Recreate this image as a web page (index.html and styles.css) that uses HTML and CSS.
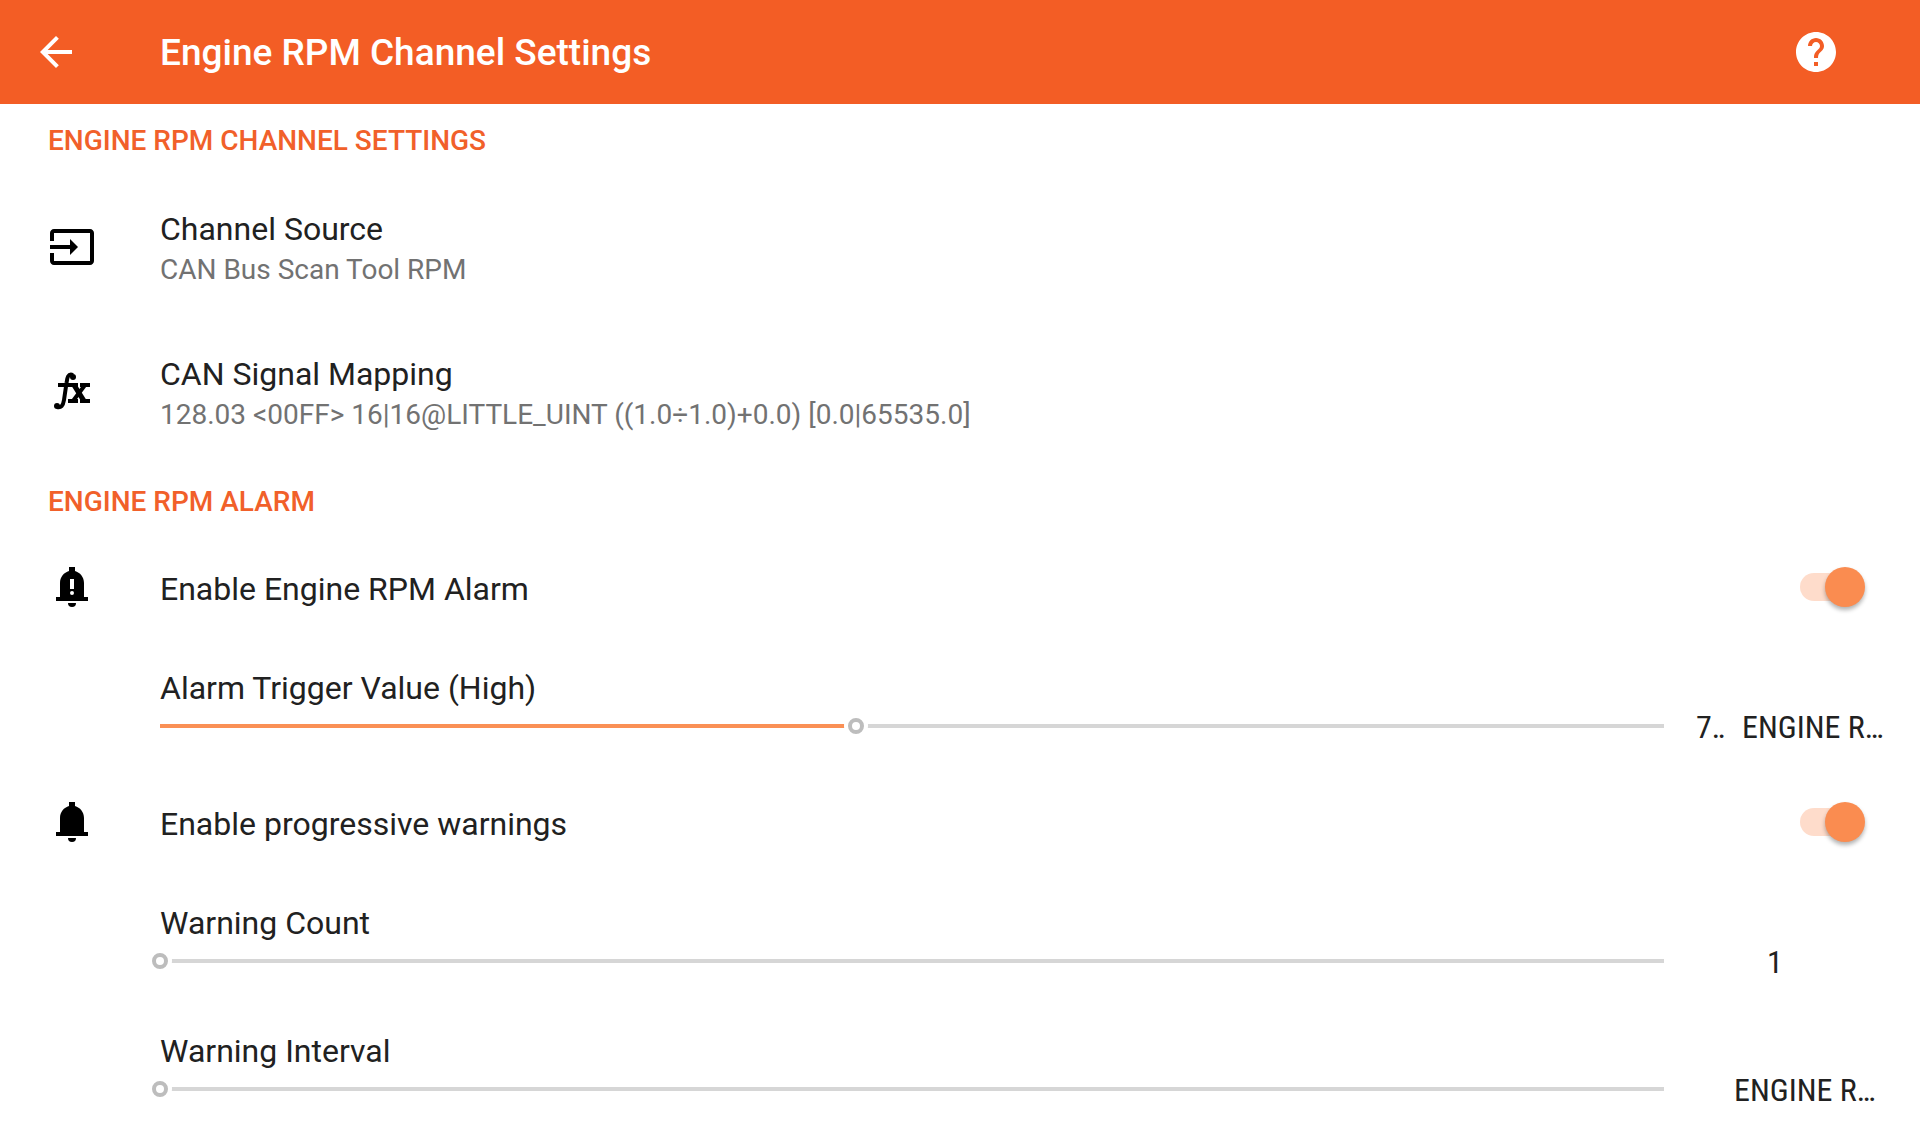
FILE: index.html
```
<!DOCTYPE html>
<html lang="en">
<head>
    <meta charset="UTF-8">
    <meta name="viewport" content="width=device-width, initial-scale=1.0">
    <title>Engine RPM Channel Settings</title>
    <link rel="stylesheet" href="styles.css">
</head>
<body>
    <header class="toolbar">
        <button class="icon-button" aria-label="Back">
            <svg class="icon" viewBox="0 0 24 24"><path d="M20 11H7.83l5.59-5.59L12 4l-8 8 8 8 1.41-1.41L7.83 13H20v-2z"/></svg>
        </button>
        <h1 class="toolbar-title">Engine RPM Channel Settings</h1>
        <button class="icon-button" aria-label="Help">
            <svg class="icon" viewBox="0 0 24 24"><path d="M12 2C6.48 2 2 6.48 2 12s4.48 10 10 10 10-4.480 10-10S17.520 2 12 2zm1 17h-2v-2h2v2zm2.070-7.750l-.9.920C13.450 12.900 13 13.500 13 15h-2v-.5c0-1.100.450-2.100 1.170-2.830l1.240-1.260c.370-.360.590-.860.590-1.410 0-1.100-.9-2-2-2s-2 .9-2 2H8c0-2.210 1.790-4 4-4s4 1.790 4 4c0 .880-.360 1.680-.930 2.250z"/></svg>
        </button>
    </header>

    <main>
        <section>
            <h2 class="category">ENGINE RPM CHANNEL SETTINGS</h2>
            <button class="row source-row">
                <svg class="icon" viewBox="0 0 24 24"><path d="M21 3.010H3c-1.100 0-2 .9-2 2V9h2V4.990h18v14.030H3V15H1v4.010c0 1.100.9 1.980 2 1.980h18c1.100 0 2-.880 2-1.980v-14c0-1.110-.9-2-2-2zM11 16l4-4-4-4v3H1v2h10v3z"/></svg>
                <span class="row-text">
                    <span class="title">Channel Source</span>
                    <span class="summary">CAN Bus Scan Tool RPM</span>
                </span>
            </button>
            <button class="row source-row">
                <svg class="icon" viewBox="0 0 48 48">
                    <circle cx="25" cy="9" r="3"/>
                    <circle cx="9" cy="38" r="3"/>
                    <path d="M25 7C20 5 19 10 18.500 15L16 32C15 38 13 40 9 39" fill="none" stroke="currentColor" stroke-width="4"/>
                    <path d="M10 15h20v4H10zM32 15h10v4H32zM20 31h10v4H20zM32 31h10v4H32z"/>
                    <path d="M23 17h6l10 16h-6z"/>
                    <path d="M37 17L25 33" stroke="currentColor" stroke-width="4"/>
                </svg>
                <span class="row-text">
                    <span class="title">CAN Signal Mapping</span>
                    <span class="summary">128.03 &lt;00FF&gt; 16|16@LITTLE_UINT ((1.0÷1.0)+0.0) [0.0|65535.0]</span>
                </span>
            </button>
        </section>

        <section>
            <h2 class="category">ENGINE RPM ALARM</h2>
            <div class="row switch-row">
                <svg class="icon" viewBox="0 0 48 48"><path fill-rule="evenodd" d="M21 4h6v4c5 1.500 9 6 9 12v14h4v4H8v-4h4V20c0-6 4-10.500 9-12zM22 16v10h4V16zM24 28a2 2 0 1 0 0 4 2 2 0 0 0 0-4z"/><path d="M20 40h8a4 4 0 0 1-8 0z"/></svg>
                <label class="title" for="alarm">Enable Engine RPM Alarm</label>
                <input class="switch" type="checkbox" role="switch" id="alarm" checked>
            </div>
            <div class="slider-row with-unit">
                <label class="title" for="trigger">Alarm Trigger Value (High)</label>
                <div class="slider-line">
                    <input class="slider" type="range" id="trigger" min="0" max="16000" step="100" value="7400" style="--fill: 46.25%">
                    <output class="value" for="trigger"><span class="number">7‥</span><span>ENGINE R…</span></output>
                </div>
            </div>
            <div class="row switch-row">
                <svg class="icon" viewBox="0 0 48 48"><path d="M21 4h6v4c5 1.500 9 6 9 12v14h4v4H8v-4h4V20c0-6 4-10.500 9-12z"/><path d="M20 40h8a4 4 0 0 1-8 0z"/></svg>
                <label class="title" for="progressive">Enable progressive warnings</label>
                <input class="switch" type="checkbox" role="switch" id="progressive" checked>
            </div>
            <div class="slider-row">
                <label class="title" for="count">Warning Count</label>
                <div class="slider-line">
                    <input class="slider" type="range" id="count" min="1" max="10" value="1" style="--fill: 0%">
                    <output class="value" for="count"><span class="number number-only">1</span></output>
                </div>
            </div>
            <div class="slider-row">
                <label class="title" for="interval">Warning Interval</label>
                <div class="slider-line">
                    <input class="slider" type="range" id="interval" min="0" max="1000" value="0" style="--fill: 0%">
                    <output class="value" for="interval"><span class="number number-empty"></span><span>ENGINE R…</span></output>
                </div>
            </div>
        </section>
    </main>
</body>
</html>
```

FILE: styles.css
```
* {
    box-sizing: border-box;
}

body {
    margin: 0;
    font-family: Roboto, "Liberation Sans", sans-serif;
    background-color: #fff;
    color: #212121;
}

button {
    border: none;
    background: none;
    font-family: inherit;
    color: inherit;
    cursor: pointer;
}

.icon {
    display: block;
    flex: none;
    width: 48px;
    height: 48px;
    fill: currentColor;
}

/* toolbar */
.toolbar {
    display: flex;
    align-items: center;
    height: 104px;
    padding: 0 80px 0 32px;
    background-color: #f35d25;
    color: #fff;
}

.icon-button {
    padding: 0;
}

.toolbar-title {
    flex: 1;
    margin: 0 0 0 80px;
    padding-top: 2px;
    font-size: 37px;
    line-height: 40px;
    font-weight: 500;
}

/* settings list */
.category {
    margin: 0;
    padding: 19px 48px 16px;
    font-size: 28px;
    line-height: 36px;
    font-weight: 500;
    color: #f1602a;
}

.row {
    display: flex;
    align-items: center;
    gap: 64px;
    width: 100%;
    padding: 0 48px 2px;
    text-align: left;
}

.row .icon {
    color: #000;
}

.source-row {
    height: 145px;
}

.switch-row {
    height: 104px;
}

.row-text {
    display: flex;
    flex-direction: column;
    gap: 3px;
    padding-top: 3px;
}

.title {
    font-size: 32px;
    line-height: 40px;
}

.switch-row .title {
    flex: 1;
    padding-top: 3px;
}

.summary {
    font-size: 28px;
    line-height: 36px;
    color: #727272;
}

/* switch */
.switch {
    appearance: none;
    display: flex;
    align-items: center;
    width: 72px;
    height: 28px;
    margin: 0;
    border-radius: 14px;
    background: linear-gradient(#fedccb, #fedccb) left / 56px 28px no-repeat;
    cursor: pointer;
}

.switch::before {
    content: "";
    flex: none;
    width: 40px;
    height: 40px;
    border-radius: 50%;
    background-color: #fa8c50;
    box-shadow: 0 3px 4px rgba(0, 0, 0, 0.3);
}

.switch:checked::before {
    margin-left: 25px;
}

/* sliders */
.slider-row {
    padding: 28px 0 24px 160px;
}

.slider-row.with-unit {
    padding-bottom: 27px;
}

.slider-row .title {
    display: block;
}

.slider-line {
    display: flex;
    align-items: center;
    height: 36px;
}

.slider {
    appearance: none;
    flex: 1;
    min-width: 0;
    height: 24px;
    margin: 0 -8px;
    background: linear-gradient(to right, #fa9055 var(--fill), #d6d6d6 var(--fill)) center / calc(100% - 16px) 4px no-repeat;
}

.slider::-webkit-slider-thumb {
    appearance: none;
    width: 16px;
    height: 16px;
    border: 4px solid #bdbdbd;
    border-radius: 50%;
    background-color: #fff;
    box-shadow: 0 0 0 4px #fff;
}

.slider::-moz-range-thumb {
    width: 16px;
    height: 16px;
    border: 4px solid #bdbdbd;
    border-radius: 50%;
    background-color: #fff;
    box-shadow: 0 0 0 4px #fff;
}

.value {
    display: flex;
    width: 224px;
    margin-left: 32px;
    padding-top: 2px;
    font-family: "Roboto Condensed", Roboto, "Liberation Sans", sans-serif;
    font-size: 32px;
    line-height: 40px;
    white-space: nowrap;
}

.number {
    flex: none;
    width: 46px;
}

.number-only {
    width: 158px;
    text-align: center;
}

.number-empty {
    width: 38px;
}
```
